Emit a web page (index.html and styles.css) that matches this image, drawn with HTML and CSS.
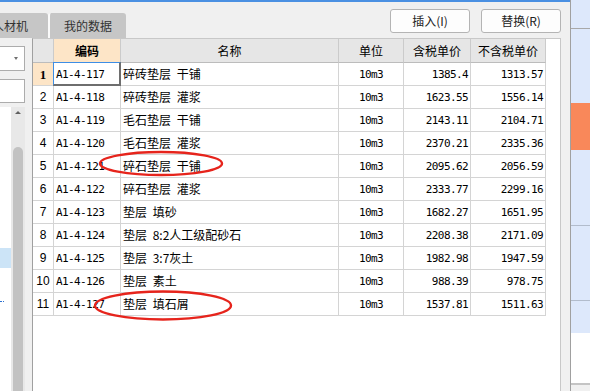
FILE: index.html
```html
<!DOCTYPE html>
<html lang="zh-CN">
<head>
<meta charset="utf-8">
<title>定额</title>
<link rel="stylesheet" href="styles.css">
</head>
<body>
<div class="app">
  <div class="main">
    <div class="topline"></div>
    <div class="toolbar">
      <div class="tabs">
        <div class="tab tab-first">人材机</div>
        <div class="tab tab-second">我的数据</div>
      </div>
      <div class="actions">
        <button class="btn">插入(I)</button>
        <button class="btn">替换(R)</button>
      </div>
    </div>
    <div class="content">
      <div class="leftpane">
        <div class="dropdown"><span class="caret"></span></div>
        <div class="input"></div>
        <div class="listarea">
          <div class="list">
            <div class="list-sel"></div>
            <div class="list-dots"></div>
          </div>
          <div class="scroll">
            <span class="uparrow"></span>
            <div class="thumb"></div>
          </div>
        </div>
      </div>
      <div class="gridwrap">
        <div class="grid">
          <div class="c h"></div>
          <div class="c h hcode">编码</div>
          <div class="c h">名称</div>
          <div class="c h">单位</div>
          <div class="c h">含税单价</div>
          <div class="c h">不含税单价</div>

          <div class="c num cur">1</div><div class="c code sel">A1-4-117</div><div class="c name">碎砖垫层 干铺</div><div class="c unit">10m3</div><div class="c price">1385.4</div><div class="c price">1313.57</div>
          <div class="c num">2</div><div class="c code">A1-4-118</div><div class="c name">碎砖垫层 灌浆</div><div class="c unit">10m3</div><div class="c price">1623.55</div><div class="c price">1556.14</div>
          <div class="c num">3</div><div class="c code">A1-4-119</div><div class="c name">毛石垫层 干铺</div><div class="c unit">10m3</div><div class="c price">2143.11</div><div class="c price">2104.71</div>
          <div class="c num">4</div><div class="c code">A1-4-120</div><div class="c name">毛石垫层 灌浆</div><div class="c unit">10m3</div><div class="c price">2370.21</div><div class="c price">2335.36</div>
          <div class="c num">5</div><div class="c code">A1-4-121</div><div class="c name">碎石垫层 干铺</div><div class="c unit">10m3</div><div class="c price">2095.62</div><div class="c price">2056.59</div>
          <div class="c num">6</div><div class="c code">A1-4-122</div><div class="c name">碎石垫层 灌浆</div><div class="c unit">10m3</div><div class="c price">2333.77</div><div class="c price">2299.16</div>
          <div class="c num">7</div><div class="c code">A1-4-123</div><div class="c name">垫层 填砂</div><div class="c unit">10m3</div><div class="c price">1682.27</div><div class="c price">1651.95</div>
          <div class="c num">8</div><div class="c code">A1-4-124</div><div class="c name">垫层 8:2人工级配砂石</div><div class="c unit">10m3</div><div class="c price">2208.38</div><div class="c price">2171.09</div>
          <div class="c num">9</div><div class="c code">A1-4-125</div><div class="c name">垫层 3:7灰土</div><div class="c unit">10m3</div><div class="c price">1982.98</div><div class="c price">1947.59</div>
          <div class="c num">10</div><div class="c code">A1-4-126</div><div class="c name">垫层 素土</div><div class="c unit">10m3</div><div class="c price">988.39</div><div class="c price">978.75</div>
          <div class="c num">11</div><div class="c code">A1-4-127</div><div class="c name">垫层 填石屑</div><div class="c unit">10m3</div><div class="c price">1537.81</div><div class="c price">1511.63</div>
        </div>
      </div>
    </div>
  </div>
  <div class="side">
    <div class="seg s1"></div>
    <div class="hline gray"></div>
    <div class="seg s2"></div>
    <div class="seg orange"></div>
    <div class="seg s3"></div>
    <div class="hline blue"></div>
    <div class="seg s4"></div>
    <div class="hline blue"></div>
    <div class="seg s5"></div>
    <div class="seg white"></div>
    <div class="gline"></div>
    <div class="rest"></div>
  </div>
</div>
<svg class="marks" width="590" height="391" viewBox="0 0 590 391">
  <ellipse cx="161" cy="163.5" rx="61" ry="11.5" fill="none" stroke="#e6241c" stroke-width="2.4"/>
  <ellipse cx="163" cy="305.5" rx="68" ry="14" fill="none" stroke="#e6241c" stroke-width="2.4"/>
</svg>
</body>
</html>
```
FILE: styles.css
```css
* { box-sizing: border-box; }
body {
  margin: 0;
  width: 590px;
  height: 391px;
  overflow: hidden;
  background: #f0f0f0;
  font-family: "Noto Sans CJK SC", sans-serif;
  font-size: 12px;
  color: #000;
  position: relative;
}
.app { display: flex; height: 391px; }
.main {
  width: 571px;
  flex: none;
  border-right: 1px solid #a0a0a0;
  display: flex;
  flex-direction: column;
}
.topline { height: 2px; flex: none; background: #4a90e2; }
.toolbar {
  height: 36px;
  flex: none;
  display: flex;
  justify-content: space-between;
  padding-right: 9px;
}
.tabs { display: flex; align-self: flex-end; margin-left: -8px; }
.tab {
  height: 25px;
  background: #c6c6c6;
  border-radius: 3px 3px 0 0;
  display: flex;
  align-items: center;
  color: #333;
  line-height: 1;
}
.tab-first { padding-right: 20px; }
.tab-second { border-left: 2px solid #fafafa; padding: 0 14px; }
.actions { display: flex; gap: 11px; margin-top: 7px; }
.btn {
  width: 80px;
  height: 24px;
  border: 1px solid #b4b4b4;
  border-radius: 3px;
  background: #fdfdfd;
  font-family: "Noto Sans CJK SC", sans-serif;
  font-size: 12px;
  color: #222;
  padding: 0;
  line-height: 1;
}
.content { flex: 1; display: flex; min-height: 0; }
.leftpane {
  width: 32px;
  flex: none;
  display: flex;
  flex-direction: column;
  padding-top: 8px;
  overflow: hidden;
}
.dropdown {
  height: 25px;
  width: 35px;
  margin-left: -10px;
  border: 1px solid #acacac;
  background: #fff;
  display: flex;
  align-items: center;
  justify-content: flex-end;
  padding-right: 6px;
  flex: none;
}
.caret {
  width: 0;
  height: 0;
  border-left: 2px solid transparent;
  border-right: 2px solid transparent;
  border-top: 3px solid #707070;
}
.input {
  height: 24px;
  width: 35px;
  margin-left: -10px;
  margin-top: 8px;
  border: 1px solid #acacac;
  background: #fff;
  flex: none;
}
.listarea { flex: 1; margin-top: 4px; display: flex; }
.list { width: 11px; background: #fff; display: flex; flex-direction: column; }
.list-sel { margin-top: 141px; height: 20px; background: #cce4f7; }
.list-dots {
  margin-top: 33px;
  width: 4px;
  height: 1px;
  border-top: 1px dotted #2a6fd0;
}
.scroll {
  width: 14px;
  background: #e8e8e8;
  display: flex;
  flex-direction: column;
  align-items: center;
}
.uparrow {
  margin-top: 4px;
  width: 0;
  height: 0;
  border-left: 3px solid transparent;
  border-right: 3px solid transparent;
  border-bottom: 3px solid #606060;
}
.thumb {
  margin-top: 33px;
  width: 10px;
  flex: 1;
  background: #c2c2c2;
  border-radius: 5px 5px 0 0;
}
.gridwrap {
  flex: 1;
  margin-right: 9px;
  background: #fff;
  border-top: 1px solid #c8c8c8;
  border-right: 1px solid #c8c8c8;
  border-left: 1px solid #a0a0a0;
}
.grid {
  display: grid;
  grid-template-columns: 21px 67px 218px 65px 67px 75px;
  grid-template-rows: 24px repeat(11, 23px);
}
.c {
  border-right: 1px solid #d4d4d4;
  border-bottom: 1px solid #d4d4d4;
  display: flex;
  align-items: center;
  white-space: nowrap;
  overflow: hidden;
  line-height: 1;
}
.h {
  background: #e6e6e6;
  justify-content: center;
  border-right-color: #cbcbcb;
  border-bottom-color: #bcbcbc;
}
.hcode { background: #fde5c7; font-weight: bold; }
.num { justify-content: center; font-family: "Liberation Sans", sans-serif; font-size: 12px; }
.num.cur { background: #fde5c7; font-weight: bold; font-family: "Liberation Serif", serif; font-size: 13px; }
.code {
  font-family: "DejaVu Sans Mono", monospace;
  font-size: 11px;
  letter-spacing: -0.6px;
  padding-left: 2px;
}
.code.sel { position: relative; overflow: visible; }
.code.sel::after {
  content: "";
  position: absolute;
  left: -1px;
  top: -1px;
  right: -1px;
  bottom: -1px;
  border-left: 1px solid #3d8ee6;
  border-top: 1px solid #3d8ee6;
  border-right: 2px solid #6e6e6e;
  border-bottom: 2px solid #6e6e6e;
}
.name { padding-left: 2px; word-spacing: 3px; }
.unit {
  justify-content: center;
  font-family: "DejaVu Sans Mono", monospace;
  font-size: 11px;
  letter-spacing: -0.6px;
}
.price {
  justify-content: flex-end;
  padding-right: 2px;
  font-family: "DejaVu Sans Mono", monospace;
  font-size: 11px;
  letter-spacing: -0.6px;
}
.side { width: 19px; flex: none; display: flex; flex-direction: column; }
.seg { flex: none; background: #dde8fb; }
.s1 { height: 28px; }
.s2 { height: 74px; }
.orange { height: 47px; background: #f9885a; }
.s3 { height: 75px; }
.s4 { height: 74px; }
.s5 { height: 32px; }
.white { height: 50px; background: #fff; }
.hline { height: 1px; flex: none; }
.hline.gray { background: #a8a8a8; }
.hline.blue { background: #b2bccc; }
.gline { height: 2px; flex: none; background: #c4c4c4; }
.rest { flex: 1; background: #f0f0f0; }
.marks { position: absolute; left: 0; top: 0; pointer-events: none; }
```
